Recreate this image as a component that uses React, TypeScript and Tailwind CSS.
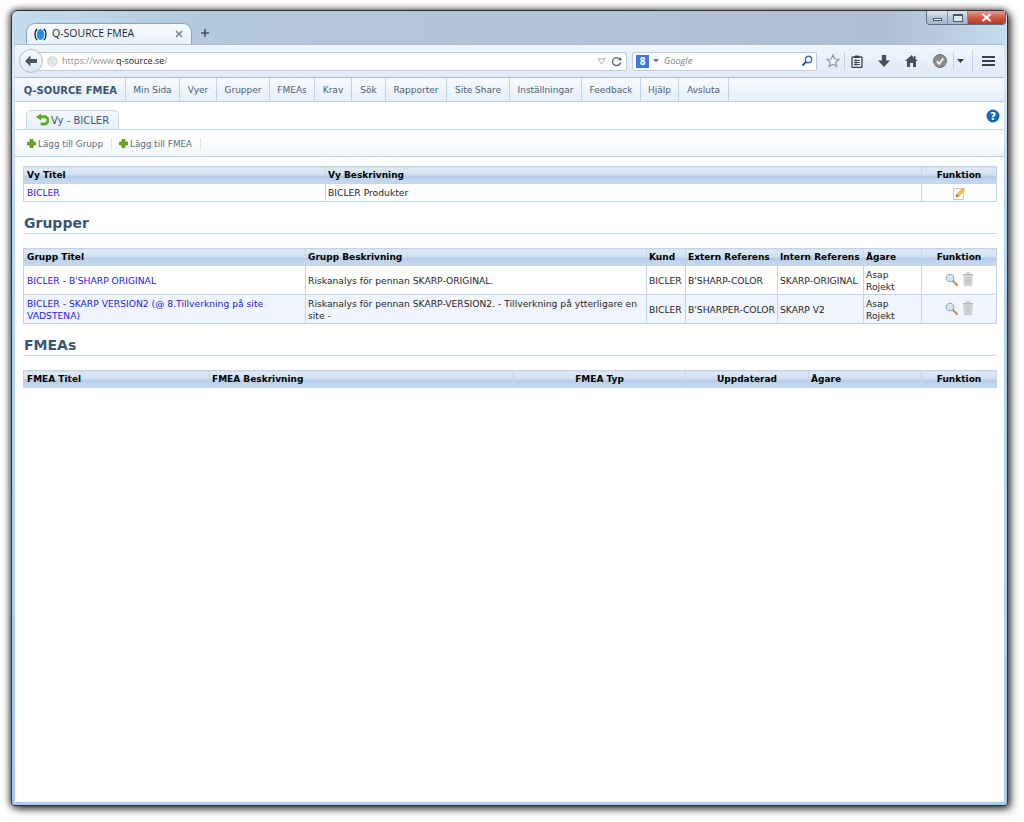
import React from "react";

const headerBg = "bg-[linear-gradient(#dfeaf7_0%,#cfe0f2_48%,#b5cdea_52%,#c9dbf0_100%)]";
const verdana = "font-['DejaVu_Sans',Verdana,sans-serif]";

function Plus() {
  return (
    <svg width="9" height="9" viewBox="0 0 9 9" className="shrink-0">
      <path d="M3 .5h3v2.500h2.500v3H6v2.500H3V6H.5V3H3z" fill="#6aa51e" stroke="#3f7a0c" strokeWidth=".6" />
    </svg>
  );
}

function BackArrow() {
  return (
    <svg width="14" height="12" viewBox="0 0 14 12">
      <path d="M6.500 0.500L1 6l5.500 5.500V8H13V4H6.500z" fill="#4a5866" />
    </svg>
  );
}

function Magnifier() {
  return (
    <svg width="13" height="13" viewBox="0 0 13 13">
      <line x1="8" y1="8" x2="12" y2="12" stroke="#c98a3a" strokeWidth="2.200" strokeLinecap="round" />
      <circle cx="5" cy="5" r="3.800" fill="#d5e6f5" stroke="#8db0cf" strokeWidth="1.100" />
    </svg>
  );
}

function Trash() {
  return (
    <svg width="12" height="14" viewBox="0 0 12 14">
      <path d="M.8 2.500h10.400M4.300 2.300V1h3.400v1.300" stroke="#b5b8b5" strokeWidth="1" fill="none" />
      <path d="M1.800 3.500h8.400l-.5 10H2.300z" fill="#dcdedc" stroke="#b5b8b5" strokeWidth=".7" />
      <path d="M4.200 5v7M6 5v7M7.800 5v7" stroke="#b0b3b0" strokeWidth=".8" />
    </svg>
  );
}

function Pencil() {
  return (
    <svg width="13" height="13" viewBox="0 0 13 13">
      <rect x=".5" y="1.500" width="10" height="11" fill="#fbfbf8" stroke="#c9c9c2" />
      <path d="M3 10l.8-2.800L9.800 1.200l2 2L5.800 9.200z" fill="#f2c04a" stroke="#d6942a" strokeWidth=".6" />
      <path d="M3 10l.8-2.800 2 2z" fill="#7a6a4a" />
    </svg>
  );
}

function Th({ w, children, center }: { w: string; children?: React.ReactNode; center?: boolean }) {
  return (
    <th className={`${w} ${headerBg} ${center ? "text-center" : "text-left"} h-[17px] whitespace-nowrap border border-[#c2d5e8] px-[2px] first:pl-[3px] py-0 text-[9px] leading-[12px] font-bold text-black`}>
      {children}
    </th>
  );
}

function Td({ children, center }: { children?: React.ReactNode; center?: boolean }) {
  return (
    <td className={`${center ? "text-center" : "text-left"} border border-[#c2d5e8] px-[2px] first:pl-[3px] pt-[1px] pb-0 align-middle text-[9.200px] leading-[12px] text-[#262626]`}>
      {children}
    </td>
  );
}

function Link({ children }: { children: React.ReactNode }) {
  return <span className="text-[#2020f0]">{children}</span>;
}

function Heading({ children }: { children: React.ReactNode }) {
  return (
    <h2 className="h-[21px] border-b border-[#c5d8ea] pt-[1px] text-[14px] leading-[18px] font-bold text-[#3b5672]">{children}</h2>
  );
}

const menu: [string, string][] = [
  ["Min Sida", "w-[54px]"],
  ["Vyer", "w-[37px]"],
  ["Grupper", "w-[53px]"],
  ["FMEAs", "w-[45px]"],
  ["Krav", "w-[37px]"],
  ["Sök", "w-[34px]"],
  ["Rapporter", "w-[61px]"],
  ["Site Share", "w-[63px]"],
  ["Inställningar", "w-[72px]"],
  ["Feedback", "w-[59px]"],
  ["Hjälp", "w-[38px]"],
  ["Avsluta", "w-[50px]"],
];

export default function App() {
  return (
    <div className="w-[1024px] h-[822px] overflow-hidden bg-white pt-[10px] pl-[11px]">
      <div className={`relative flex h-[796px] w-[997px] flex-col rounded-t-[6px] rounded-b-[3px] border border-[#2e3236] bg-[linear-gradient(#c4d8ea_0px,#dfeaf5_60px,#b8d5f1_200px,#a6cbef_100%)] px-[3px] pb-[3px] shadow-[3px_3px_9px_rgba(0,0,0,0.7),-2px_0_7px_rgba(0,0,0,0.45),0_-1px_6px_rgba(0,0,0,0.25)]`}>
        {/* window controls */}
        <div className="absolute right-[1px] top-0 flex h-[14px] w-[80px] overflow-hidden rounded-b-[4px] border border-t-0 border-[#5d6d80]">
          <div className="flex w-[21px] items-center justify-center border-r border-[#7f8fa0] bg-[linear-gradient(#dbe6f1,#b8c8d8_50%,#a5b6c8)]">
            <div className="mt-[3px] h-[3px] w-[9px] border border-[#4b5866] bg-white" />
          </div>
          <div className="flex w-[20px] items-center justify-center border-r border-[#7f8fa0] bg-[linear-gradient(#dbe6f1,#b8c8d8_50%,#a5b6c8)]">
            <div className="h-[8px] w-[10px] border border-[#4b5866] border-t-2 bg-[#dfe8f0]" />
          </div>
          <div className="flex flex-1 items-center justify-center bg-[linear-gradient(#e6a295,#cf5a45_50%,#b93a28)]">
            <svg width="11" height="9" viewBox="0 0 11 9">
              <path d="M1.500 1l8 7M9.500 1l-8 7" stroke="#fff" strokeWidth="2.200" />
            </svg>
          </div>
        </div>

        {/* tab strip */}
        <div className="-mx-[1px] flex h-[33px] shrink-0 items-end rounded-t-[5px] bg-[linear-gradient(90deg,#c6dcee_0%,#b4c8db_20%,#aebfd1_88%,#c5dbee_100%)] pl-[12px] pr-[1px]">
          <div className="relative flex h-[21px] w-[166px] items-center rounded-t-[9px] border border-b-0 border-[#8ea2b6] bg-[linear-gradient(#f6fafd,#e9f2fa)] pl-[7px] pr-[8px] font-['Open_Sans','Noto_Sans',sans-serif] text-[10.500px] text-[#1c2430]">
            <svg width="13" height="13" viewBox="0 0 12 12" className="mr-[5px] shrink-0">
              <ellipse cx="6" cy="6" rx="3.400" ry="5" fill="#1f8df0" />
              <path d="M3 .8C.3 3 .3 9 3 11.200M9 .8c2.700 2.200 2.700 8.200 0 10.400" fill="none" stroke="#222" strokeWidth="1.300" />
            </svg>
            <span className="flex-1 whitespace-nowrap">Q-SOURCE FMEA</span>
            <svg width="8" height="8" viewBox="0 0 8 8">
              <path d="M1 1l6 6M7 1L1 7" stroke="#7a8794" strokeWidth="1.600" />
            </svg>
          </div>
          <svg width="10" height="10" viewBox="0 0 10 10" className="mb-[6px] ml-[8px]">
            <path d="M5 1v8M1 5h8" stroke="#45525f" strokeWidth="1.600" />
          </svg>
        </div>

        {/* navigation bar */}
        <div className="flex h-[34px] shrink-0 items-center border-y border-[#a9c0d6] bg-[linear-gradient(#eef5fc,#e0ebf6)] pl-[4px] pr-[6px]">
          <div className="relative z-10 flex h-[24px] w-[24px] shrink-0 items-center justify-center rounded-full border border-[#aebfd0] bg-[linear-gradient(#fbfdff,#dde7f1)]">
            <BackArrow />
          </div>
          <div className="-ml-[6px] flex h-[19px] w-[590px] shrink-0 items-center rounded-[2px] border border-[#bccbda] bg-white pl-[9px] pr-[4px] font-['Open_Sans','Noto_Sans',sans-serif] text-[9px] text-[#8b8f94]">
            <svg width="11" height="11" viewBox="0 0 11 11" className="mr-[4px] shrink-0">
              <circle cx="5.500" cy="5.500" r="5" fill="#d9dcde" stroke="#c8cbce" strokeWidth=".5" />
              <path d="M1 5.500h9M5.500 1c-3 2.500-3 6.500 0 9M5.500 1c3 2.500 3 6.500 0 9" fill="none" stroke="#fff" strokeWidth=".6" />
            </svg>
            <span className="flex-1 whitespace-nowrap">
              https://www.<span className="text-[#1a1a1a]">q-source.se</span>/
            </span>
            <svg width="9" height="7" viewBox="0 0 9 7" className="mr-[5px]">
              <path d="M.8.800h7.400L4.500 6.200z" fill="none" stroke="#a9b3bd" strokeWidth="1" />
            </svg>
            <svg width="11" height="11" viewBox="0 0 11 11">
              <path d="M9 3.500A4 4 0 1 0 9.500 6.500" fill="none" stroke="#5f6b77" strokeWidth="1.400" />
              <path d="M10.300.8v3.700H6.700z" fill="#5f6b77" />
            </svg>
          </div>
          <div className="ml-[5px] flex h-[19px] w-[185px] shrink-0 items-center rounded-[2px] border border-[#bccbda] bg-white pl-[3px] pr-[3px] font-['Open_Sans','Noto_Sans',sans-serif] text-[9.200px] italic text-[#7b7f84]">
            <span className="flex h-[13px] w-[13px] shrink-0 items-center justify-center bg-[#3b78e0] text-[10px] not-italic font-bold leading-none text-white">8</span>
            <svg width="6" height="4" viewBox="0 0 6 4" className="ml-[4px] mr-[5px]">
              <path d="M0 0h6L3 3.500z" fill="#69737d" />
            </svg>
            <span className="flex-1">Google</span>
            <svg width="12" height="12" viewBox="0 0 12 12">
              <circle cx="7.500" cy="4.500" r="3.200" fill="none" stroke="#2a6fb0" strokeWidth="1.400" />
              <path d="M5.200 6.800L1.500 10.500" stroke="#1f5f9e" strokeWidth="2" />
            </svg>
          </div>
          <svg width="14" height="14" viewBox="0 0 14 14" className="ml-[9px] shrink-0">
            <path d="M7 1l1.800 4 4.200.4-3.200 2.800 1 4.300L7 10.200 3.200 12.500l1-4.300L1 5.400 5.200 5z" fill="#eef3f8" stroke="#8a98a5" strokeWidth="1.200" />
          </svg>
          <div className="ml-[4px] h-[18px] w-px shrink-0 bg-[#c4d2df]" />
          <svg width="12" height="13" viewBox="0 0 12 13" className="ml-[6px] shrink-0">
            <rect x="1" y="2" width="10" height="10.500" rx="1" fill="#e8eef3" stroke="#36424e" strokeWidth="1.300" />
            <rect x="4" y=".5" width="4" height="2.500" fill="#36424e" />
            <path d="M3 5.500h6M3 7.500h6M3 9.500h6M5 4v7" stroke="#36424e" strokeWidth=".9" />
          </svg>
          <svg width="12" height="12" viewBox="0 0 12 12" className="ml-[15px] shrink-0">
            <path d="M3.800 0h4.400v5.500H12L6 12 0 5.500h3.800z" fill="#45525f" />
          </svg>
          <svg width="13" height="12" viewBox="0 0 13 12" className="ml-[15px] shrink-0">
            <path d="M6.500 0L0 6h2v6h3V8h3v4h3V6h2L10.500 4.100V1H9v1.700z" fill="#45525f" />
          </svg>
          <svg width="14" height="14" viewBox="0 0 14 14" className="ml-[15px] shrink-0">
            <circle cx="7" cy="7" r="6.500" fill="#8b8b8b" stroke="#6f6f6f" />
            <path d="M3.800 7.200l2.400 2.600 4.200-5.400" fill="none" stroke="#f4f4f4" strokeWidth="1.800" />
          </svg>
          <div className="ml-[6px] h-[18px] w-px shrink-0 bg-[#c4d2df]" />
          <svg width="7" height="4" viewBox="0 0 7 4" className="ml-[3px] shrink-0">
            <path d="M0 0h7L3.500 4z" fill="#36424e" />
          </svg>
          <div className="ml-[8px] h-[22px] w-px shrink-0 bg-[#c4d2df]" />
          <div className="ml-[9px] flex w-[13px] shrink-0 flex-col gap-[2px]">
            <div className="h-[2px] bg-[#36424e]" />
            <div className="h-[2px] bg-[#36424e]" />
            <div className="h-[2px] bg-[#36424e]" />
          </div>
        </div>

        {/* page */}
        <div className={`flex min-h-0 flex-1 flex-col bg-white ${verdana}`}>
          {/* app menu */}
          <div className="flex h-[24px] shrink-0 items-stretch border-b border-[#bcd0e3] bg-[linear-gradient(#f8fbfe,#e5eefa)] text-[9px] text-[#4d6078]">
            <div className="flex w-[111px] items-center justify-end whitespace-nowrap border-r border-[#c2d5e8] pr-[8px] pt-[2px] text-[10px] font-bold text-[#3b5672]">
              Q-SOURCE FMEA
            </div>
            {menu.map(([label, w]) => (
              <div key={label} className={`${w} flex items-center justify-center whitespace-nowrap border-r border-[#c2d5e8] pt-[3px]`}>
                {label}
              </div>
            ))}
          </div>

          {/* page tab row */}
          <div className="relative flex h-[28px] shrink-0 items-end border-b border-[#c5d8ea] pl-[11px]">
            <div className="flex h-[19px] w-[93px] items-center gap-[2px] rounded-t-[5px] border border-b-0 border-[#c2d5e8] bg-[linear-gradient(#f2f7fc,#e8f0f9)] pl-[8px] text-[10px] text-[#3b5672]">
              <svg width="14" height="14" viewBox="0 0 15 14" className="shrink-0">
                <path d="M5 3.500h5a3.800 3.800 0 0 1 0 7.800H6" fill="none" stroke="#5cae1e" strokeWidth="3" />
                <path d="M6.500 0L1 3.800 6.500 7.500z" fill="#5cae1e" />
              </svg>
              Vy - BICLER
            </div>
            <svg width="14" height="14" viewBox="0 0 14 14" className="absolute right-[4px] top-[7px]">
              <circle cx="7" cy="7" r="6.500" fill="#1766b5" />
              <text x="7" y="10.800" textAnchor="middle" fontSize="10.500" fontWeight="700" fill="#fff" fontFamily="'DejaVu Sans',sans-serif">?</text>
            </svg>
          </div>

          {/* toolbar */}
          <div className="flex h-[27px] shrink-0 items-center border-b border-[#bcd4ea] bg-[linear-gradient(#ffffff_40%,#eff5fb)] pl-[12px] pt-[1px] text-[8.800px] text-[#5c6b7a]">
            <Plus />
            <span className="ml-[2px] whitespace-nowrap pt-[2px]">Lägg till Grupp</span>
            <div className="ml-[8px] h-[12px] w-px bg-[#d8e2ec]" />
            <div className="ml-[7px]"><Plus /></div>
            <span className="ml-[2px] whitespace-nowrap pt-[2px]">Lägg till FMEA</span>
            <div className="ml-[8px] h-[12px] w-px bg-[#d8e2ec]" />
          </div>

          {/* content */}
          <div className="flex flex-col pl-[9px] pr-[7px] pt-[9px]">
            <table className="-ml-[1px] w-[973px] table-fixed border-collapse">
              <thead>
                <tr>
                  <Th w="w-[302px]">Vy Titel</Th>
                  <Th w="w-[596px]">Vy Beskrivning</Th>
                  <Th w="w-[75px]" center>Funktion</Th>
                </tr>
              </thead>
              <tbody>
                <tr className="h-[18px]">
                  <Td><Link>BICLER</Link></Td>
                  <Td>BICLER Produkter</Td>
                  <Td center><span className="inline-flex align-middle"><Pencil /></span></Td>
                </tr>
              </tbody>
            </table>

            <div className="mt-[11px]"><Heading>Grupper</Heading></div>

            <table className="-ml-[1px] mt-[14px] w-[973px] table-fixed border-collapse">
              <thead>
                <tr>
                  <Th w="w-[282px]">Grupp Titel</Th>
                  <Th w="w-[341px]">Grupp Beskrivning</Th>
                  <Th w="w-[39px]">Kund</Th>
                  <Th w="w-[92px]">Extern Referens</Th>
                  <Th w="w-[86px]">Intern Referens</Th>
                  <Th w="w-[58px]">Ägare</Th>
                  <Th w="w-[75px]" center>Funktion</Th>
                </tr>
              </thead>
              <tbody>
                <tr className="h-[29px]">
                  <Td><Link>BICLER - B'SHARP ORIGINAL</Link></Td>
                  <Td>Riskanalys för pennan SKARP-ORIGINAL.</Td>
                  <Td>BICLER</Td>
                  <Td>B'SHARP-COLOR</Td>
                  <Td>SKARP-ORIGINAL</Td>
                  <Td>Asap Rojekt</Td>
                  <Td center>
                    <span className="inline-flex items-center gap-[4px] pb-[3px] align-middle"><Magnifier /><Trash /></span>
                  </Td>
                </tr>
                <tr className="h-[29px] bg-[#f0f5fd]">
                  <Td><Link>BICLER - SKARP VERSION2 (@ 8.Tillverkning på site VADSTENA)</Link></Td>
                  <Td>Riskanalys för pennan SKARP-VERSION2. - Tillverkning på ytterligare en site -</Td>
                  <Td>BICLER</Td>
                  <Td>B'SHARPER-COLOR</Td>
                  <Td>SKARP V2</Td>
                  <Td>Asap Rojekt</Td>
                  <Td center>
                    <span className="inline-flex items-center gap-[4px] pb-[3px] align-middle"><Magnifier /><Trash /></span>
                  </Td>
                </tr>
              </tbody>
            </table>

            <div className="mt-[11px]"><Heading>FMEAs</Heading></div>

            <table className="-ml-[1px] mt-[14px] w-[973px] table-fixed border-collapse">
              <thead>
                <tr>
                  <Th w="w-[186px]">FMEA Titel</Th>
                  <Th w="w-[304px]">FMEA Beskrivning</Th>
                  <Th w="w-[172px]" center>FMEA Typ</Th>
                  <Th w="w-[123px]" center>Uppdaterad</Th>
                  <Th w="w-[113px]">Ägare</Th>
                  <Th w="w-[75px]" center>Funktion</Th>
                </tr>
              </thead>
            </table>
          </div>
        </div>
      </div>
    </div>
  );
}
